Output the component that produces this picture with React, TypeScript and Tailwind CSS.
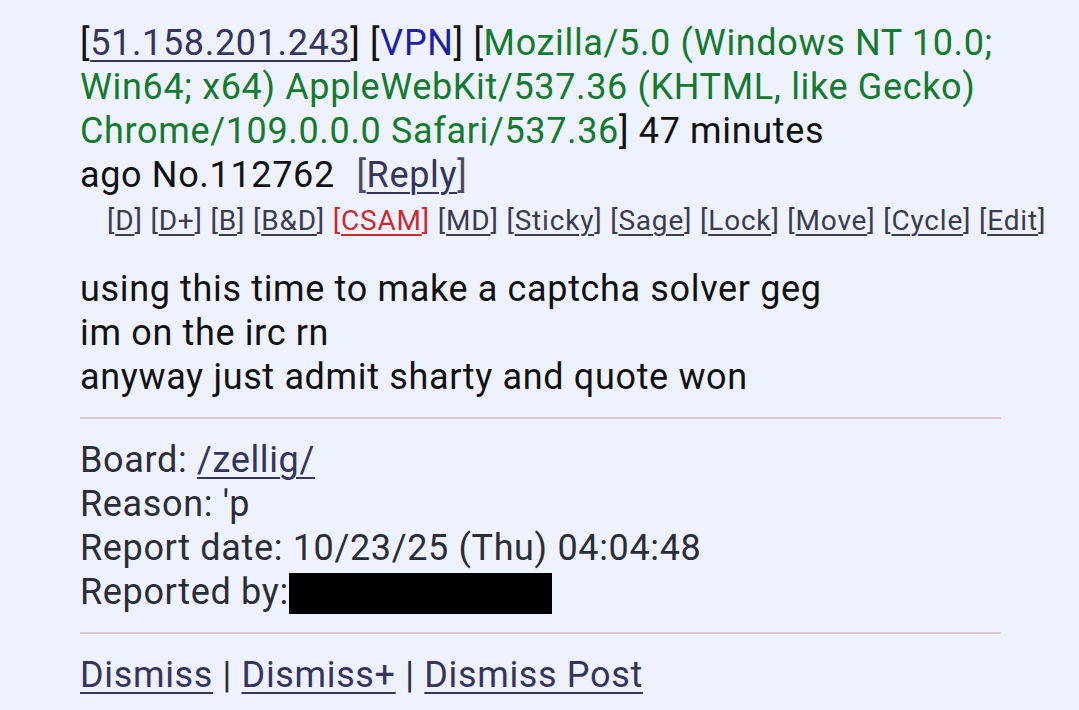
import React from "react";

const link = "text-[#34345c] underline decoration-[2px] underline-offset-[5px]";

export default function App() {
  const mods = ["D", "D+", "B", "B&D", "CSAM", "MD", "Sticky", "Sage", "Lock", "Move", "Cycle", "Edit"];
  return (
    <div
      className="w-[1079px] h-[710px] bg-[#eef2ff] overflow-hidden pl-[80px] pt-[21px]"
      style={{ fontFamily: "Roboto, 'Noto Sans', sans-serif" }}
    >
      <div className="text-[36px] leading-[44px] tracking-[0.65px] text-[#111]">
        <div className="whitespace-nowrap">
          [<a className={link}>51.158.201.243</a>] [<span className="text-[#1f1fa3]">VPN</span>]{" "}
          [<span className="text-[#15792e]">Mozilla/5.0 (Windows NT 10.0;</span>
        </div>
        <div className="whitespace-nowrap text-[#15792e]">
          Win64; x64) AppleWebKit/537.36 (KHTML, like Gecko)
        </div>
        <div className="whitespace-nowrap">
          <span className="text-[#15792e]">Chrome/109.0.0.0 Safari/537.36</span>] 47 minutes
        </div>
        <div className="whitespace-nowrap">
          ago No.112762 <span className="ml-[12px] text-[#4a4a66]">[<a className={link}>Reply</a>]</span>
        </div>
      </div>
      <div className="pl-[27px] pt-[6px] text-[28px] leading-[36px] tracking-[0.8px] text-[#3a3b4e] whitespace-nowrap">
        {mods.map((m, i) => (
          <span key={m} className={m === "CSAM" ? "text-[#cc2a2f]" : ""}>
            [<a className={"underline decoration-[1.5px] underline-offset-[4px]"}>{m}</a>]
            {i < mods.length - 1 ? " " : ""}
          </span>
        ))}
      </div>
      <div className="pt-[28px] text-[36px] leading-[44px] tracking-[0.65px] text-[#111]">
        <div>using this time to make a captcha solver geg</div>
        <div>im on the irc rn</div>
        <div>anyway just admit sharty and quote won</div>
      </div>
      <div className="mt-[18px] w-[921px] h-[2px] bg-[#dcc9d0]" />
      <div className="pt-[19px] text-[36px] leading-[44px] tracking-[0.65px] text-[#2a2d37]">
        <div>
          Board: <a className={link + " text-[#2a2d37]"}>/zellig/</a>
        </div>
        <div>Reason: 'p</div>
        <div>Report date: 10/23/25 (Thu) 04:04:48</div>
        <div className="flex items-center">
          <span>Reported by:</span>
          <span className="inline-block w-[263px] h-[41px] bg-black mt-[2px]" />
        </div>
      </div>
      <div className="mt-[18px] w-[921px] h-[2px] bg-[#dcc9d0]" />
      <div className="pt-[19px] text-[36px] leading-[44px] tracking-[0.65px] text-[#2a2d37] whitespace-nowrap">
        <a className={link}>Dismiss</a> | <a className={link}>Dismiss+</a> | <a className={link}>Dismiss Post</a>
      </div>
    </div>
  );
}
